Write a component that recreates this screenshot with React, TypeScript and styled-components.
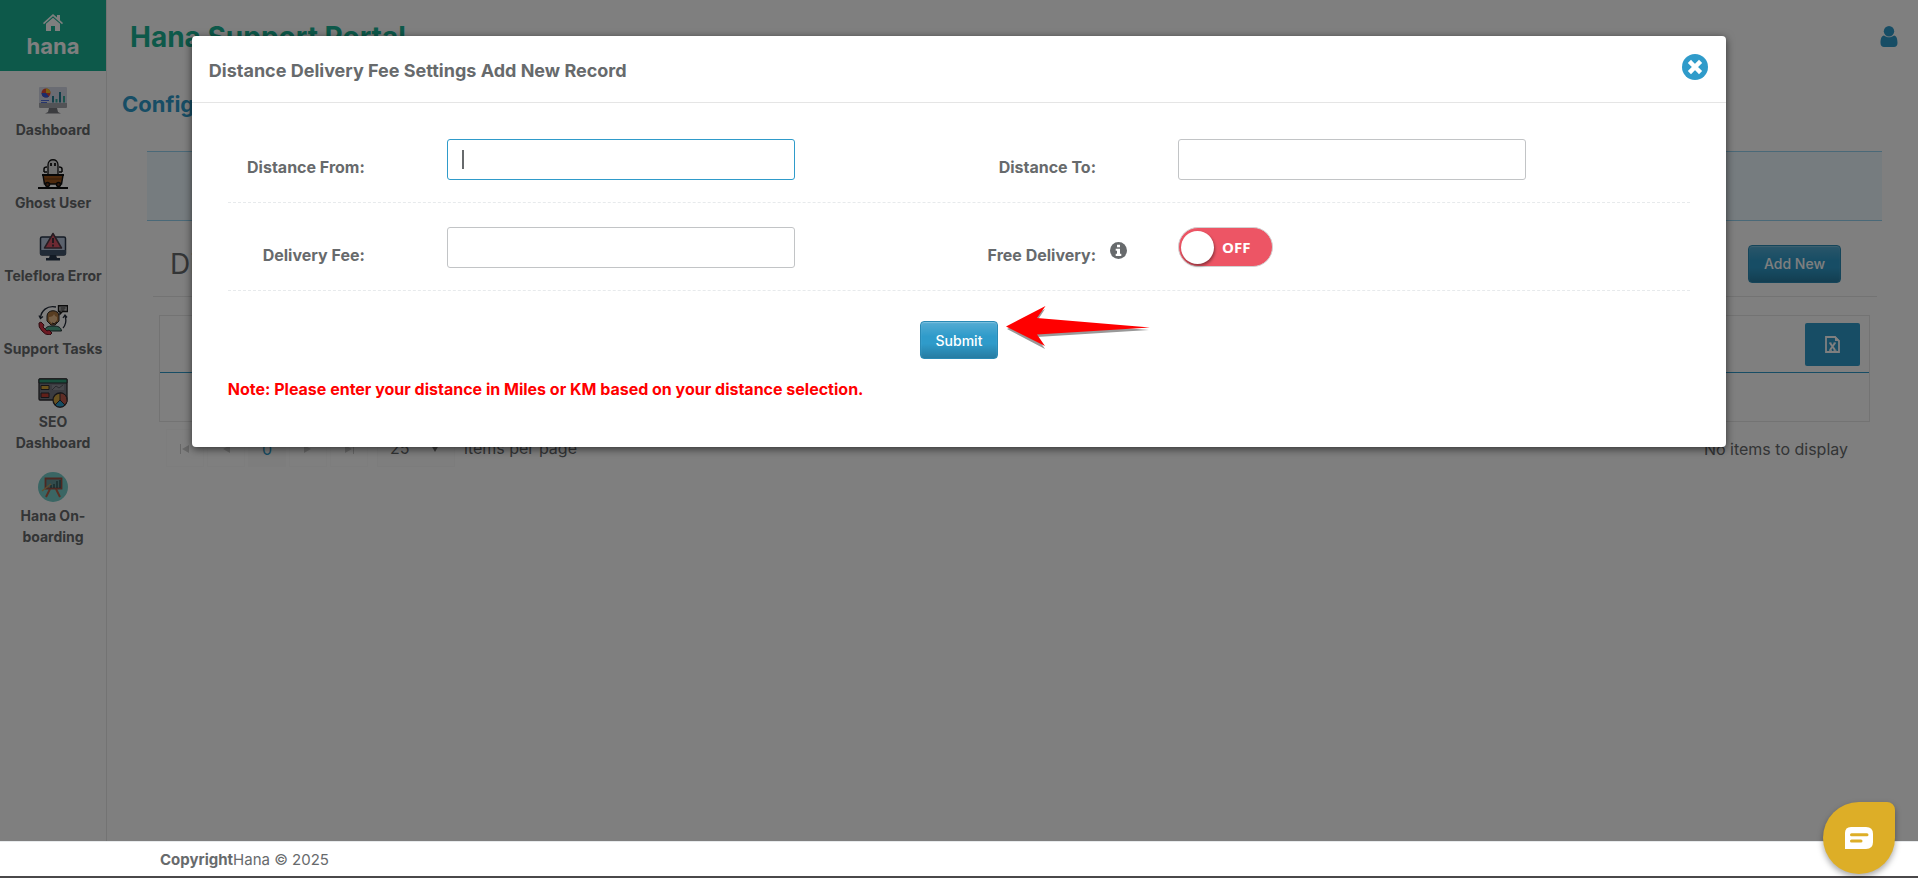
import React from "react";
import styled, { createGlobalStyle, css } from "styled-components";

const GlobalStyle = createGlobalStyle`
  *, *::before, *::after { box-sizing: border-box; }
  body {
    margin: 0;
    background: #fff;
    color: #676a6c;
    font-family: Inter, "Noto Sans", sans-serif;
    font-size: 16px;
    line-height: 21px;
  }
  button, input, select { font: inherit; color: inherit; }
  h1, h2, h3, p { margin: 0; }
`;

const Page = styled.div`
  display: flex;
  flex-direction: column;
  min-height: 100vh;
`;

const Body = styled.div`
  position: relative;
  display: flex;
  flex: 1;
`;

const Sidebar = styled.nav`
  display: flex;
  flex-direction: column;
  flex: none;
  width: 107px;
  border-right: 1px solid #e7e7e7;
`;

const Brand = styled.a`
  display: flex;
  flex-direction: column;
  align-items: center;
  gap: 2px;
  height: 71px;
  padding-top: 14px;
  background: #1ab394;
  color: #fff;
  font-size: 22px;
  font-weight: 700;
  line-height: 26px;
  text-decoration: none;
`;

const Menu = styled.ul`
  display: flex;
  flex-direction: column;
  gap: 19px;
  margin: 0;
  padding: 15px 0 0;
  list-style: none;
`;

const MenuLink = styled.a`
  display: flex;
  flex-direction: column;
  align-items: center;
  gap: 3px;
  color: inherit;
  font-size: 14px;
  font-weight: 700;
  text-align: center;
  text-decoration: none;
`;

const Main = styled.main`
  flex: 1;
  min-width: 0;
`;

const TopBar = styled.header`
  display: flex;
  align-items: center;
  justify-content: space-between;
  height: 72px;
  padding: 0 20px 0 23px;
`;

const PortalName = styled.h1`
  padding-top: 2px;
  color: #1ab394;
  font-size: 28px;
  line-height: 32px;
`;

const PlainButton = styled.button`
  display: flex;
  padding: 0;
  border: 0;
  background: none;
  color: #2f9bca;
`;

const PageTitle = styled.h2`
  padding: 18px 15px 0;
  color: #2f9bca;
  font-size: 22px;
  line-height: 28px;
`;

const Notice = styled.div`
  height: 70px;
  margin: 33px 36px 0 40px;
  border: solid #94d2f0;
  border-width: 1px 0;
  background: #ecf9ff;
`;

const SectionHead = styled.div`
  display: flex;
  align-items: center;
  justify-content: space-between;
  height: 76px;
  margin: 0 41px 0 46px;
  padding: 10px 36px 0 17px;
  border-bottom: 1px solid #e7e7e7;
`;

const SectionTitle = styled.h3`
  font-size: 28px;
  font-weight: 400;
  line-height: 32px;
`;

const PrimaryButton = styled.button`
  height: 38px;
  padding: 0 15px;
  border: 1px solid #2a8ab5;
  border-radius: 4px;
  background: linear-gradient(#55acd3, #2f9bca 40%, #2f9bca 60%, #267ca2);
  box-shadow: inset 0 1px 1px #7dc0de;
  color: #fff;
  font-size: 14px;
  font-weight: 500;
`;

const Grid = styled.section`
  margin: 18px 48px 0 52px;
  border: solid #e7e7e7;
  border-width: 1px 1px 0;
`;

const GridToolbar = styled.div`
  display: flex;
  align-items: center;
  justify-content: flex-end;
  height: 57px;
  padding: 0 9px;
  border-bottom: 1px solid #2f9bca;
`;

const ExportButton = styled.button`
  display: flex;
  align-items: center;
  justify-content: center;
  width: 55px;
  height: 43px;
  border: 0;
  border-radius: 2px;
  background: #2f9bca;
  color: #fff;
`;

const GridRow = styled.div`
  height: 49px;
  margin-bottom: 7px;
  border-bottom: 1px solid #e7e7e7;
`;

const Pager = styled.div`
  display: flex;
  align-items: center;
  gap: 3px;
  margin: 0 70px 0 59px;
`;

const PagerButton = styled.button<{ $current?: boolean }>`
  display: flex;
  align-items: center;
  justify-content: center;
  width: 38px;
  height: 38px;
  padding: 2px 0 0;
  border: 1px solid #fafafa;
  background: ${(p) => (p.$current ? "#fbfbfb" : "#fff")};
  color: ${(p) => (p.$current ? "#2f9bca" : "#cfcfcf")};
`;

const PageSize = styled.div`
  position: relative;
  display: flex;
  margin: 0 6px;
`;

const PageSizeSelect = styled.select`
  width: 78px;
  height: 38px;
  padding: 0 12px;
  border: 1px solid #f8f8f8;
  background: #fcfcfc;
  appearance: none;
`;

const SelectMark = styled.svg`
  position: absolute;
  top: 16px;
  right: 16px;
  pointer-events: none;
`;

const PagerInfo = styled.span`
  margin-left: auto;
  padding-top: 3px;
`;

const Backdrop = styled.div`
  position: absolute;
  inset: 0;
  padding-top: 36px;
  background: rgba(0, 0, 0, 0.5);
`;

const Dialog = styled.section`
  width: 80%;
  margin: 0 auto;
  padding-bottom: 47px;
  border-radius: 4px;
  background: #fff;
  box-shadow: 0 2px 8px rgba(0, 0, 0, 0.6);
`;

const DialogHead = styled.header`
  display: flex;
  align-items: flex-start;
  justify-content: space-between;
  height: 67px;
  padding: 18px 18px 0 17px;
  border-bottom: 1px solid #e5e5e5;
`;

const DialogTitle = styled.h2`
  padding-top: 5px;
  font-size: 18px;
  line-height: 24px;
`;

const Form = styled.form`
  padding: 12px 36px 0;
`;

const FormRow = styled.div`
  display: grid;
  grid-template-columns: 1fr 1fr;
  height: 88px;
  padding-top: 24px;
  border-bottom: 1px dashed #e7eaec;
`;

const Field = styled.div`
  display: grid;
  grid-template-columns: 137px 82px 1fr;
  align-items: start;
  padding-right: 164px;
`;

const Label = styled.label`
  padding-top: 18px;
  font-weight: 700;
  text-align: right;
`;

const Hint = styled.span`
  display: flex;
  padding: 15px 0 0 14px;
`;

const InputWrap = styled.div`
  position: relative;
  grid-column: 3;
`;

const TextInput = styled.input<{ $active?: boolean }>`
  display: block;
  width: 100%;
  height: 41px;
  padding: 0 15px;
  border: 1px solid ${(p) => (p.$active ? "#2f9bca" : "#c2c4c6")};
  border-radius: 3px;
  outline: 0;
  background: #fff;
`;

const Caret = styled.span`
  position: absolute;
  top: 11px;
  left: 15px;
  width: 2px;
  height: 19px;
  background: #676a6c;
`;

const knob = css`
  content: "";
  width: 33px;
  height: 33px;
  border-radius: 50%;
  background: #fff;
  box-shadow: 1px 2px 3px rgba(0, 0, 0, 0.4);
`;

const Switch = styled.label`
  position: relative;
  display: flex;
  align-items: center;
  gap: 8px;
  grid-column: 3;
  width: 95px;
  height: 40px;
  padding-left: 2px;
  border: 1px solid #d2d2d2;
  border-radius: 20px;
  background: #ed5565;
  color: #fff;
  font-family: "Open Sans", sans-serif;
  font-size: 15px;
  font-weight: 700;
  &::before { ${knob} }
`;

const SwitchInput = styled.input`
  position: absolute;
  inset: 0;
  margin: 0;
  opacity: 0;
`;

const Actions = styled.div`
  position: relative;
  display: flex;
  justify-content: center;
  padding: 30px 0 18px;
`;

const Pointer = styled.svg`
  position: absolute;
  top: 14px;
  left: calc(50% + 46px);
`;

const Note = styled.p`
  padding-top: 1px;
  color: #f00;
  font-weight: 700;
  line-height: 22px;
`;

const Footer = styled.footer`
  display: flex;
  align-items: center;
  height: 37px;
  padding-left: 160px;
  border-top: 1px solid #e7eaec;
  border-bottom: 2px solid #4a484a;
  background: #fff;
  font-size: 15px;
`;

const ChatButton = styled.button`
  position: fixed;
  right: 23px;
  bottom: 4px;
  display: flex;
  align-items: center;
  justify-content: center;
  width: 72px;
  height: 72px;
  padding: 0;
  border: 0;
  border-radius: 50% 8px 50% 50%;
  background: #ddae27;
  box-shadow: 0 3px 6px rgba(0, 0, 0, 0.35);
`;

const HomeIcon = () => (
  <svg width="20" height="17" viewBox="0 0 20 17" fill="currentColor">
    <path d="M0 9 10 0l4 3.600V1h3v5.300L20 9l-1 1.200L10 2.300 1 10.200z" />
    <path d="M3 9.700 10 3.700l7 6V17h-5v-5H8v5H3z" />
  </svg>
);

const UserIcon = () => (
  <svg width="18" height="21" viewBox="0 0 18 21" fill="currentColor">
    <circle cx="9" cy="5.200" r="5.200" />
    <path d="M4 9.500c3 2.400 7 2.400 10 0 2.600.3 3.500 3.500 3.500 7.500 0 2.500-1.500 4-3.500 4H4c-2 0-3.500-1.500-3.500-4 0-4 .9-7.200 3.500-7.500z" />
  </svg>
);

const CloseIcon = () => (
  <svg width="26" height="26" viewBox="0 0 26 26">
    <circle cx="13" cy="13" r="13" fill="currentColor" />
    <path d="m9 9 8 8m0-8-8 8" stroke="#fff" strokeWidth="4.500" strokeLinecap="square" />
  </svg>
);

const InfoIcon = () => (
  <svg width="17" height="17" viewBox="0 0 17 17">
    <circle cx="8.500" cy="8.500" r="8.500" fill="#676a6c" />
    <path d="M7 2.800h3v2.500H7zM5.700 6.700H10v5h1.300v2.200H5.700v-2.200H7V8.800H5.700z" fill="#fff" />
  </svg>
);

const ExportIcon = () => (
  <svg width="15" height="17" viewBox="0 0 15 17" fill="none" stroke="currentColor">
    <path d="M1 1h9l4 4v11H1z" strokeWidth="1.800" />
    <path d="M10 0v5h5z" fill="currentColor" strokeWidth="0" />
    <path d="m5 7 5 7m0-7-5 7" strokeWidth="2" />
    <path d="M4 14.300h3m1.500 0h3M4 7h2.500m2 0H11" />
  </svg>
);

const DashboardIcon = () => (
  <svg width="30" height="30" viewBox="0 0 30 30">
    <path d="M1 2q0-1 1-1h26q1 0 1 1v15H1z" fill="#d5d9e6" />
    <path d="M1 17h28v4q0 1-1 1H2q-1 0-1-1z" fill="#a4a6ac" />
    <path d="M11 22h8l1 4 3 1.500H7L10 26z" fill="#77797f" />
    <circle cx="8" cy="7" r="4.500" fill="#e34b35" />
    <path d="M8 7V2.500A4.500 4.500 0 0 1 12.500 7z" fill="#f6bd25" />
    <path d="M8 7H3.500A4.500 4.500 0 0 0 11 10.400z" fill="#3659d6" />
    <path d="M3 14.500h8M3 16.500h6" stroke="#4e6cda" />
    <path d="M15 10v6.500M22 6v10.500" stroke="#247e94" strokeWidth="2" />
    <path d="M18.500 13v3.500M26 10v6.500" stroke="#37a998" strokeWidth="2" />
  </svg>
);

const GhostIcon = () => (
  <svg width="30" height="30" viewBox="0 0 30 30" stroke="#111">
    <path d="M10 16V6c0-7 10-7 10 0v10z" fill="#ddd" strokeWidth="1.300" />
    <path d="M6 13V10q0-2 3-2m15 5v-3q0-2-3-2M6 13h3m15 0h-3" fill="none" strokeWidth="1.500" />
    <path d="M13 4v3m4-3v3" strokeWidth="1.800" />
    <path d="M5 16h20l-1.500 9h-17z" fill="#9c541a" strokeWidth="1.500" />
    <path d="M4 16h22" strokeWidth="2" />
    <path d="M7 20h16" stroke="#673815" />
    <circle cx="9.500" cy="25.500" r="2" fill="#6c3a1c" strokeWidth="1.500" />
    <circle cx="20.500" cy="25.500" r="2" fill="#6c3a1c" strokeWidth="1.500" />
    <path d="M0 29h30" strokeWidth="2" />
  </svg>
);

const ErrorIcon = () => (
  <svg width="30" height="30" viewBox="0 0 30 30">
    <rect x="2.500" y="5" width="25" height="18" rx="1.500" fill="#b6c5da" stroke="#29364a" strokeWidth="1.500" />
    <path d="M2 18h26v5H2z" fill="#42566f" />
    <path d="M12 23h6l1 3h3v2.500H8V26h3z" fill="#27364b" />
    <path d="M15 1.500 23.500 16h-17z" fill="#db5264" stroke="#4c3944" strokeWidth="1.500" strokeLinejoin="round" />
    <path d="M15 6v5m0 1.500v2" stroke="#43323d" strokeWidth="2" />
  </svg>
);

const SupportIcon = () => (
  <svg width="30" height="30" viewBox="0 0 30 30" fill="none">
    <path d="M18 2C9 0 3 6 2.500 13M1 10.500l1.500 3 2.500-2M27 11c2 5 0 10-2 12m0-10 2-3 2 2.500" stroke="#222a38" strokeWidth="1.300" />
    <path d="M7 26c0-4 3-5 8-5s8 1 8.500 5z" fill="#53a88b" stroke="#232e32" />
    <path d="M9 16V11c0-7 12-7 12 0v5l-4 4h-4z" fill="#b17a43" stroke="#2b2827" />
    <path d="M11 12q4 0 5-3 1 3 3 3v3q-4 7-8 0z" fill="#e9bd8b" />
    <path d="M19 17q-3 3-5 1" stroke="#322722" />
    <path d="M1 18 3 17l3 3-1 2 4 4 2-1 3 3-2 2q-5 0-8-4-4-4-3-8z" fill="#d93447" stroke="#5a1923" />
    <path d="M20.500.7h9V6.500h-5L22 9V6.500h-1.500z" fill="#bdbdbd" stroke="#191919" strokeWidth="1.400" />
    <path d="M22.500 3h5m-5 2h4" stroke="#222" />
  </svg>
);

const SeoIcon = () => (
  <svg width="30" height="30" viewBox="0 0 30 30" stroke="#2c2b30">
    <rect x="1" y="1" width="28" height="21" rx="1" fill="#777982" strokeWidth="1.300" />
    <path d="M1 1h28v4H1z" fill="#2f9c79" />
    <path d="M3 7.500h8v4H3z" fill="#d4a536" />
    <path d="M3 15h8v4.500H3z" fill="#c34035" />
    <path d="M14 7h12v5H14z" fill="#8d8f96" stroke="none" />
    <path d="M14 12 18 8l3 2 4-3" stroke="#53555d" fill="none" />
    <circle cx="22" cy="22" r="7" fill="#d1a540" strokeWidth="1.300" />
    <path d="M22 22v-7a7 7 0 0 1 5 12z" fill="#bf5b4d" />
    <path d="m22 22 5 5a7 7 0 0 1-10 0z" fill="#2e9ac5" />
  </svg>
);

const OnboardingIcon = () => (
  <svg width="30" height="30" viewBox="0 0 30 30" fill="none">
    <circle cx="15" cy="15" r="15" fill="#74cdc9" />
    <path d="m12 17-4 8m10-8 4 8" stroke="#b56147" strokeWidth="2" />
    <path d="M7.500 6.500h16v10h-16z" fill="#65999a" stroke="#9a5144" strokeWidth="1.800" />
    <path d="M13 16v-3m3 3v-4m3 4V9m3 7V8" stroke="#33585c" strokeWidth="1.500" />
    <path d="m4 19 9-7" stroke="#bd985f" strokeWidth="1.500" />
  </svg>
);

const menu = [
  { label: "Dashboard", Icon: DashboardIcon },
  { label: "Ghost User", Icon: GhostIcon },
  { label: "Teleflora Error", Icon: ErrorIcon },
  { label: "Support Tasks", Icon: SupportIcon },
  { label: "SEO Dashboard", Icon: SeoIcon },
  { label: "Hana On-boarding", Icon: OnboardingIcon },
];

const PagerArrow = ({ back, end }: { back?: boolean; end?: boolean }) => (
  <svg width="10" height="10" viewBox="0 0 10 10" fill="currentColor">
    <path d={back ? "M9 1v8L2 5z" : "M1 1v8l7-4z"} />
    {end && <path d={back ? "M0 0h1v10H0z" : "M9 0h1v10H9z"} />}
  </svg>
);

export default function App() {
  return (
    <>
      <GlobalStyle />
      <Page>
        <Body>
          <Sidebar>
            <Brand href="#home">
              <HomeIcon />
              hana
            </Brand>
            <Menu>
              {menu.map(({ label, Icon }) => (
                <li key={label}>
                  <MenuLink href="#menu">
                    <Icon />
                    {label}
                  </MenuLink>
                </li>
              ))}
            </Menu>
          </Sidebar>
          <Main>
            <TopBar>
              <PortalName>Hana Support Portal</PortalName>
              <PlainButton aria-label="Account"><UserIcon /></PlainButton>
            </TopBar>
            <PageTitle>Configuration</PageTitle>
            <Notice />
            <SectionHead>
              <SectionTitle>Dist.</SectionTitle>
              <PrimaryButton>Add New</PrimaryButton>
            </SectionHead>
            <Grid>
              <GridToolbar>
                <ExportButton aria-label="Export to Excel"><ExportIcon /></ExportButton>
              </GridToolbar>
              <GridRow />
            </Grid>
            <Pager>
              <PagerButton aria-label="First page"><PagerArrow back end /></PagerButton>
              <PagerButton aria-label="Previous page"><PagerArrow back /></PagerButton>
              <PagerButton $current>0</PagerButton>
              <PagerButton aria-label="Next page"><PagerArrow /></PagerButton>
              <PagerButton aria-label="Last page"><PagerArrow end /></PagerButton>
              <PageSize>
                <PageSizeSelect id="page-size" defaultValue="25">
                  <option>25</option>
                </PageSizeSelect>
                <SelectMark width="8" height="7" viewBox="0 0 8 7" fill="#777">
                  <path d="M0 0h8L4 7z" />
                </SelectMark>
              </PageSize>
              <label htmlFor="page-size">items per page</label>
              <PagerInfo>No items to display</PagerInfo>
            </Pager>
          </Main>
          <Backdrop>
            <Dialog role="dialog" aria-labelledby="dialog-title">
              <DialogHead>
                <DialogTitle id="dialog-title">Distance Delivery Fee Settings Add New Record</DialogTitle>
                <PlainButton aria-label="Close"><CloseIcon /></PlainButton>
              </DialogHead>
              <Form onSubmit={(e) => e.preventDefault()}>
                <FormRow>
                  <Field>
                    <Label htmlFor="distance-from">Distance From:</Label>
                    <InputWrap>
                      <TextInput id="distance-from" $active />
                      <Caret />
                    </InputWrap>
                  </Field>
                  <Field>
                    <Label htmlFor="distance-to">Distance To:</Label>
                    <InputWrap><TextInput id="distance-to" /></InputWrap>
                  </Field>
                </FormRow>
                <FormRow>
                  <Field>
                    <Label htmlFor="delivery-fee">Delivery Fee:</Label>
                    <InputWrap><TextInput id="delivery-fee" /></InputWrap>
                  </Field>
                  <Field>
                    <Label htmlFor="free-delivery">Free Delivery:</Label>
                    <Hint><InfoIcon /></Hint>
                    <Switch>
                      <SwitchInput id="free-delivery" type="checkbox" />
                      OFF
                    </Switch>
                  </Field>
                </FormRow>
                <Actions>
                  <PrimaryButton type="submit">Submit</PrimaryButton>
                  <Pointer width="148" height="46" viewBox="0 0 148 46">
                    <path d="m2 24 38-20-8 12 112 9-112 7 8 12z" fill="#999" />
                    <path d="M1 21.500 40.500 1 32 13l113 9.500L32 29.500 40 41z" fill="#f00" />
                  </Pointer>
                </Actions>
                <Note>Note: Please enter your distance in Miles or KM based on your distance selection.</Note>
              </Form>
            </Dialog>
          </Backdrop>
        </Body>
        <Footer>
          <strong>Copyright</strong>Hana © 2025
        </Footer>
        <ChatButton aria-label="Open chat">
          <svg width="28" height="22" viewBox="0 0 28 22">
            <path d="M6 0h15q7 0 7 7v8q0 7-7 7H0V6q0-6 6-6z" fill="#fff" />
            <path d="M6.500 7.800h15.500M6.500 14h9.500" stroke="#ddae27" strokeWidth="3" strokeLinecap="round" />
          </svg>
        </ChatButton>
      </Page>
    </>
  );
}
